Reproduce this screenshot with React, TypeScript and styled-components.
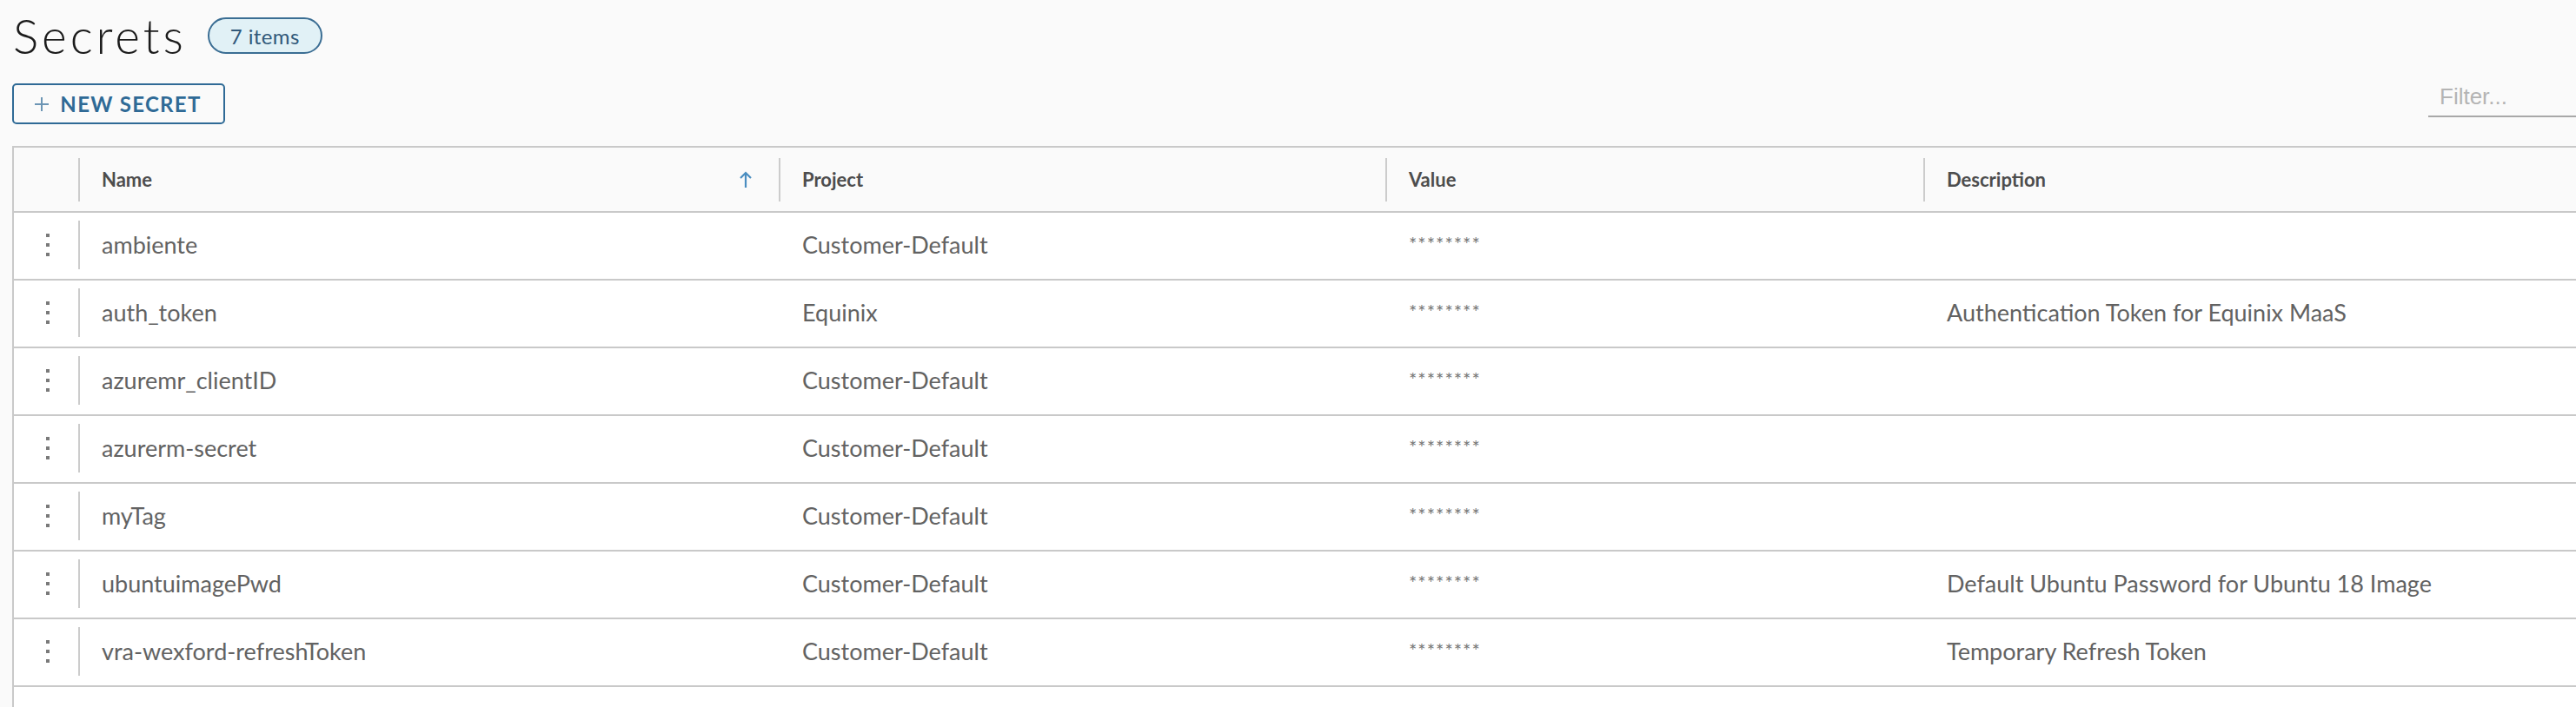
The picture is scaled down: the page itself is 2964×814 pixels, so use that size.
import styled, { createGlobalStyle } from 'styled-components';

const GlobalStyle = createGlobalStyle`
    html, body {
        margin: 0;
        padding: 0;
        overflow: hidden;
        background: #fafafa;
    }
    body {
        font-family: Lato, "Open Sans", sans-serif;
    }
`;

const Page = styled.div`
    width: 3040px;
    padding-left: 14px;
    background: #fafafa;
`;

const TitleRow = styled.div`
    display: flex;
    align-items: center;
    gap: 24px;
    height: 82px;
`;

const Title = styled.h1`
    margin: 0 0 0 1px;
    font-size: 55px;
    line-height: 82px;
    font-weight: 300;
    letter-spacing: 3.9px;
    color: #1b1b1b;
`;

const Badge = styled.span`
    display: inline-flex;
    align-items: center;
    box-sizing: border-box;
    height: 42px;
    padding: 0 24px;
    border: 2px solid #3a6d93;
    border-radius: 21px;
    background: #e1f1f6;
    color: #31597a;
    font-size: 24px;
    letter-spacing: 0.4px;
`;

const Toolbar = styled.div`
    display: flex;
    justify-content: space-between;
    align-items: flex-start;
    margin-top: 14px;
    height: 47px;
`;

const PrimaryOutlineButton = styled.button`
    display: inline-flex;
    align-items: center;
    justify-content: center;
    gap: 12px;
    box-sizing: border-box;
    width: 245px;
    height: 47px;
    padding: 0 2px 0 0;
    border: 2px solid #2f6a96;
    border-radius: 5px;
    background: transparent;
    color: #2f6a96;
    font-family: Lato, sans-serif;
    font-size: 24px;
    font-weight: 700;
    letter-spacing: 1.3px;
`;

const FilterInput = styled.input`
    box-sizing: border-box;
    width: 260px;
    height: 40px;
    margin-top: -1px;
    padding: 0 0 6px 13px;
    border: none;
    border-bottom: 2px solid #a8a8a8;
    background: transparent;
    font-family: "Liberation Sans", Arial, sans-serif;
    font-size: 26px;
    outline: none;

    &::placeholder {
        color: #b4b4b4;
    }
`;

const Grid = styled.div`
    margin-top: 25px;
    border: 2px solid #c9c9c9;
    border-right: none;
    background: #ffffff;
`;

const columns = '74px 806px 698px 619px 1fr';

const HeaderRow = styled.div`
    display: grid;
    grid-template-columns: ${columns};
    height: 73px;
    background: #fafafa;
    border-bottom: 2px solid #c9c9c9;
`;

const BodyRow = styled.div`
    display: grid;
    grid-template-columns: ${columns};
    height: 76px;
    border-bottom: 2px solid #c9c9c9;
`;

const HeaderCell = styled.div<{ $divider?: boolean }>`
    position: relative;
    display: flex;
    align-items: center;
    justify-content: space-between;
    padding: 0 30px 0 27px;
    font-size: 22px;
    font-weight: 700;
    color: #4d4d4d;

    &::before {
        content: '';
        display: ${({ $divider }) => ($divider ? 'block' : 'none')};
        position: absolute;
        left: 0;
        top: 12px;
        bottom: 11px;
        width: 2px;
        background: #cccccc;
    }
`;

const Cell = styled.div<{ $divider?: boolean }>`
    position: relative;
    display: flex;
    align-items: center;
    padding: 0 20px 4px 27px;
    font-size: 27px;
    color: #626262;
    white-space: nowrap;

    &::before {
        content: '';
        display: ${({ $divider }) => ($divider ? 'block' : 'none')};
        position: absolute;
        left: 0;
        top: 9px;
        bottom: 11px;
        width: 2px;
        background: #cccccc;
    }
`;

const ActionCell = styled.div`
    display: flex;
    align-items: center;
    justify-content: center;
    padding: 0 0 2px 4px;
`;

const Masked = styled.span`
    font-size: 22px;
    letter-spacing: 1px;
    color: #777777;
    position: relative;
    top: -1px;
`;

const Filler = styled.div`
    height: 40px;
`;

interface Secret {
    name: string;
    project: string;
    description: string;
}

const secrets: Secret[] = [
    { name: 'ambiente', project: 'Customer-Default', description: '' },
    { name: 'auth_token', project: 'Equinix', description: 'Authentication Token for Equinix MaaS' },
    { name: 'azuremr_clientID', project: 'Customer-Default', description: '' },
    { name: 'azurerm-secret', project: 'Customer-Default', description: '' },
    { name: 'myTag', project: 'Customer-Default', description: '' },
    { name: 'ubuntuimagePwd', project: 'Customer-Default', description: 'Default Ubuntu Password for Ubuntu 18 Image' },
    { name: 'vra-wexford-refreshToken', project: 'Customer-Default', description: 'Temporary Refresh Token' },
];

function PlusIcon() {
    return (
        <svg width="18" height="18" viewBox="0 0 18 18">
            <path d="M9 1v16M1 9h16" stroke="#2f6a96" strokeOpacity="0.7" strokeWidth="2" fill="none" />
        </svg>
    );
}

function SortUpIcon() {
    return (
        <svg width="16" height="20" viewBox="0 0 16 20">
            <path d="M8 2v17M2 8l6-6 6 6" stroke="#4a8dc0" strokeWidth="2.2" fill="none" />
        </svg>
    );
}

function EllipsisVertical() {
    return (
        <svg width="6" height="28" viewBox="0 0 6 28">
            <rect x="1" y="1" width="4" height="4" fill="#7a7a7a" />
            <rect x="1" y="12" width="4" height="4" fill="#7a7a7a" />
            <rect x="1" y="23" width="4" height="4" fill="#7a7a7a" />
        </svg>
    );
}

function App() {
    return (
        <>
            <GlobalStyle />
            <Page>
                <TitleRow>
                    <Title>Secrets</Title>
                    <Badge>7 items</Badge>
                </TitleRow>
                <Toolbar>
                    <PrimaryOutlineButton>
                        <PlusIcon />
                        NEW SECRET
                    </PrimaryOutlineButton>
                    <FilterInput placeholder="Filter..." />
                </Toolbar>
                <Grid>
                    <HeaderRow>
                        <HeaderCell />
                        <HeaderCell $divider>
                            Name
                            <SortUpIcon />
                        </HeaderCell>
                        <HeaderCell $divider>Project</HeaderCell>
                        <HeaderCell $divider>Value</HeaderCell>
                        <HeaderCell $divider>Description</HeaderCell>
                    </HeaderRow>
                    {secrets.map((secret) => (
                        <BodyRow key={secret.name}>
                            <ActionCell>
                                <EllipsisVertical />
                            </ActionCell>
                            <Cell $divider>{secret.name}</Cell>
                            <Cell>{secret.project}</Cell>
                            <Cell>
                                <Masked>********</Masked>
                            </Cell>
                            <Cell>{secret.description}</Cell>
                        </BodyRow>
                    ))}
                    <Filler />
                </Grid>
            </Page>
        </>
    );
}

export default App;
